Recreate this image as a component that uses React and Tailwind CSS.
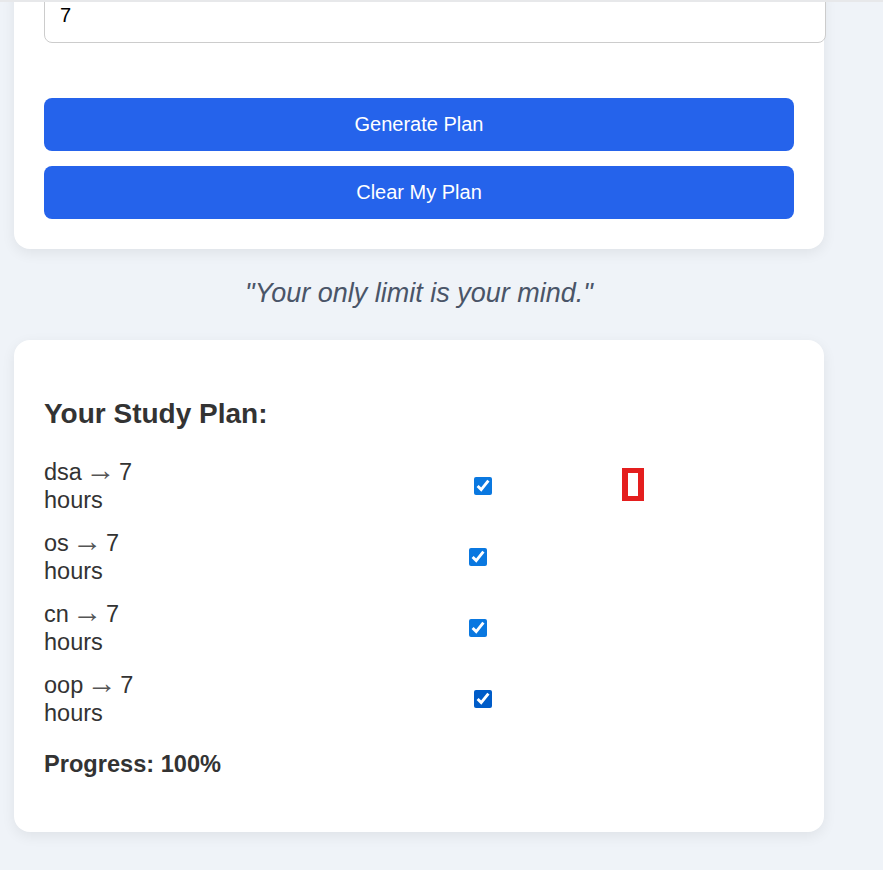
const PLAN = [
  { subject: "dsa", hours: 7, boxGap: "ml-[330px]", accent: "accent-[#0a78e0]", remove: true },
  { subject: "os", hours: 7, boxGap: "ml-[325px]", accent: "accent-[#0a78e0]" },
  { subject: "cn", hours: 7, boxGap: "ml-[325px]", accent: "accent-[#0a78e0]" },
  { subject: "oop", hours: 7, boxGap: "ml-[330px]", accent: "accent-[#005cc8]" },
];

export default function App() {
  const done = PLAN.length;
  const progress = Math.round((done / PLAN.length) * 100);

  return (
    <div className="min-h-screen bg-[#eff3f8] pl-[14px] pb-[38px] font-['Liberation_Sans',Arial,sans-serif]">
      {/* thin bar across the top edge */}
      <div className="fixed inset-x-0 top-0 z-10 h-[2px] bg-[#e7e8ea]" />

      {/* Planner form (top is scrolled off) */}
      <div className="w-[810px] rounded-b-2xl bg-white px-[30px] pb-[30px] shadow-[0_4px_14px_rgba(0,0,0,0.07)]">
        <input
          type="number"
          readOnly
          value="7"
          className="-mt-[12px] block w-[782px] rounded-lg border border-[#cccccc] bg-white px-[15px] py-[15px] text-[20px] leading-[23px] text-black outline-none"
        />
        <button
          type="button"
          className="mt-[55px] block h-[53px] w-full rounded-lg bg-[#2563eb] text-[20px] leading-[23px] text-white"
        >
          Generate Plan
        </button>
        <button
          type="button"
          className="mt-[15px] block h-[53px] w-full rounded-lg bg-[#2563eb] text-[20px] leading-[23px] text-white"
        >
          Clear My Plan
        </button>
      </div>

      {/* Quote */}
      <p className="mt-[29px] mb-[31px] w-[810px] text-center text-[27px] leading-[31px] italic text-[#4a5568]">
        "Your only limit is your mind."
      </p>

      {/* Study plan */}
      <div className="w-[810px] rounded-2xl bg-white p-[30px] shadow-[0_4px_14px_rgba(0,0,0,0.07)]">
        <h3 className="mt-[28px] mb-[28px] text-[28px] leading-[32px] font-bold text-[#333333]">
          Your Study Plan:
        </h3>

        <ul className="flex flex-col gap-[15px]">
          {PLAN.map((p) => (
            <li key={p.subject} className="flex h-[56px] items-center">
              <span className="w-[100px] text-[23.5px] leading-[28px] text-[#333333]">
                {p.subject}{" "}
                <span className="-mx-[3px] text-[30px] leading-[0] text-[#555555]">→</span>{" "}
                {p.hours} hours
              </span>
              <input
                type="checkbox"
                checked
                readOnly
                className={`${p.boxGap} ${p.accent} h-[18px] w-[18px]`}
              />
              {p.remove && (
                <span className="mb-[4px] ml-[130px] block h-[33px] w-[22px] border-x-[6px] border-y-[5px] border-[#e41e1e]" />
              )}
            </li>
          ))}
        </ul>

        <p className="mt-[24px] mb-[24px] text-[23.6px] leading-[27px] font-bold text-[#333333]">
          Progress: {progress}%
        </p>
      </div>
    </div>
  );
}
